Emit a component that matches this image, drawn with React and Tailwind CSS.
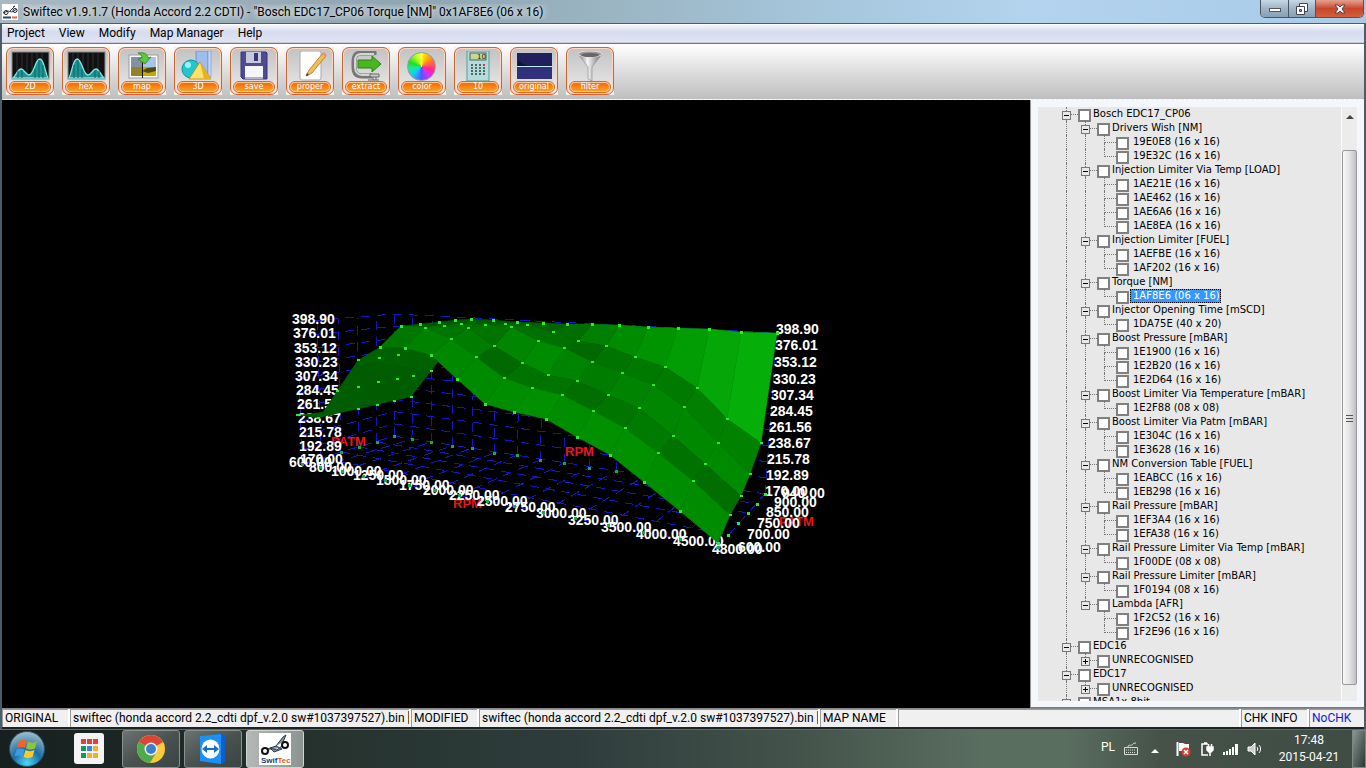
import React, { useState } from "react";

// ---------- 3D map data ----------

// Rows of the surface, back (940) to front (600), each from high RPM to low
const SURFACE = [
  [[777, 333], [741, 332], [709, 329], [678, 328], [648, 327], [619, 325], [592, 324], [567, 324], [543, 323], [517, 322], [493, 320], [471, 319], [455, 320], [439, 322], [420, 324], [401, 326]],
  [[761, 443], [727, 419], [697, 388], [665, 367], [635, 357], [606, 346], [578, 341], [553, 332], [527, 325], [505, 324], [485, 325], [461, 324], [444, 326], [425, 328], [401, 326]],
  [[750, 474], [718, 443], [684, 407], [653, 385], [622, 373], [592, 362], [564, 348], [538, 341], [511, 327], [485, 325], [461, 324], [444, 326], [425, 328], [401, 326]],
  [[741, 496], [705, 464], [673, 436], [639, 408], [608, 395], [577, 381], [548, 375], [522, 363], [494, 346], [468, 328], [444, 326], [425, 328], [401, 326]],
  [[730, 515], [693, 481], [658, 453], [625, 428], [593, 411], [562, 395], [532, 388], [504, 378], [476, 357], [451, 339], [425, 328], [401, 326]],
  [[718, 543], [680, 511], [644, 482], [610, 455], [577, 437], [546, 419], [514, 412], [485, 404], [457, 379], [431, 355], [405, 348], [380, 347]],
];

const SHADES = [
  ["#06ae0a", "#04a608", "#029d04", "#009500", "#008b00", "#007f00", "#006e00", "#006400", "#006000", "#005c00", "#005c00", "#005a00", "#005a00", "#005a00"],
  ["#008200", "#007f00", "#007a00", "#007900", "#007400", "#006900", "#007000", "#007000", "#006a00", "#006600", "#006600", "#006600", "#006400"],
  ["#008a00", "#008800", "#008600", "#008300", "#007c00", "#008300", "#008c00", "#008600", "#007400", "#007000", "#007000", "#007000"],
  ["#006e00", "#007200", "#007a00", "#007600", "#006e00", "#007400", "#007200", "#006a00", "#007c00", "#007400", "#007000"],
  ["#008c00", "#008e00", "#009000", "#009000", "#008e00", "#009000", "#008e00", "#008a00", "#008800", "#008200", "#007800"],
];

const FOLD_DOTS = [
  [337, 391], [358, 360], [379, 358], [398, 355], [358, 387], [378, 382], [397, 379], [413, 376],
  [431, 371], [358, 409], [377, 405], [394, 401], [411, 397], [318, 418], [297, 415],
];

const FLOOR_FRONT = [
  [302, 464], [320, 467], [342, 471], [363, 476], [385, 480], [409, 485], [435, 490], [459, 495],
  [487, 501], [514, 506], [543, 512], [575, 518], [608, 525], [643, 532], [680, 539], [718, 547],
];
const FLOOR_BACK = [
  [394, 436], [412, 439], [431, 442], [452, 446], [472, 448], [494, 453], [517, 455], [540, 460],
  [564, 463], [589, 468], [616, 471], [645, 476], [674, 481], [703, 485], [734, 489], [765, 494],
];
const FLOOR_LEFT = [[302, 464], [321, 458], [341, 452], [359, 447], [377, 442], [394, 436]];
const FLOOR_RIGHT = [[718, 547], [728, 535], [738, 523], [748, 513], [757, 504], [765, 494]];

const TORQUE = ["398.90", "376.01", "353.12", "330.23", "307.34", "284.45", "261.56", "238.67", "215.78", "192.89", "170.00"];
const LEFT_AXIS = [[292, 319], [293, 333], [294, 348], [295, 362], [295, 376], [296, 390], [297, 404], [298, 418], [299, 432], [299, 446], [300, 459]];
const RIGHT_AXIS = [[776, 329], [775, 345], [774, 362], [773, 379], [771, 395], [770, 411], [769, 427], [768, 443], [767, 459], [766, 475], [765, 491]];

const RPM_LABELS = [
  ["600.00", 289, 462], ["800.00", 309, 467], ["1000.00", 331, 471], ["1250.00", 353, 475],
  ["1500.00", 376, 480], ["1750.00", 399, 485], ["2000.00", 423, 490], ["2250.00", 449, 495],
  ["2500.00", 477, 501], ["2750.00", 505, 507], ["3000.00", 536, 513], ["3250.00", 568, 520],
  ["3500.00", 601, 527], ["4000.00", 636, 534], ["4500.00", 673, 541], ["4800.00", 712, 549],
];
const PATM_LABELS = [
  ["600.00", 738, 547], ["700.00", 747, 534], ["750.00", 757, 523],
  ["850.00", 766, 512], ["900.00", 774, 502], ["940.00", 782, 493],
];
const AXIS_NAMES = [["PATM", 331, 441], ["RPM", 565, 451], ["RPM", 453, 503], ["PATM", 779, 521]];

// ---------- tree data ----------
// [depth, label, state, last child of its parent]
const TREE = [
  [0, "Bosch EDC17_CP06", "-"],
  [1, "Drivers Wish [NM]", "-"],
  [2, "19E0E8 (16 x 16)"],
  [2, "19E32C (16 x 16)", "", true],
  [1, "Injection Limiter Via Temp [LOAD]", "-"],
  [2, "1AE21E (16 x 16)"],
  [2, "1AE462 (16 x 16)"],
  [2, "1AE6A6 (16 x 16)"],
  [2, "1AE8EA (16 x 16)", "", true],
  [1, "Injection Limiter [FUEL]", "-"],
  [2, "1AEFBE (16 x 16)"],
  [2, "1AF202 (16 x 16)", "", true],
  [1, "Torque [NM]", "-"],
  [2, "1AF8E6 (06 x 16)", "", true],
  [1, "Injector Opening Time [mSCD]", "-"],
  [2, "1DA75E (40 x 20)", "", true],
  [1, "Boost Pressure [mBAR]", "-"],
  [2, "1E1900 (16 x 16)"],
  [2, "1E2B20 (16 x 16)"],
  [2, "1E2D64 (16 x 16)", "", true],
  [1, "Boost Limiter Via Temperature [mBAR]", "-"],
  [2, "1E2F88 (08 x 08)", "", true],
  [1, "Boost Limiter Via Patm [mBAR]", "-"],
  [2, "1E304C (16 x 16)"],
  [2, "1E3628 (16 x 16)", "", true],
  [1, "NM Conversion Table [FUEL]", "-"],
  [2, "1EABCC (16 x 16)"],
  [2, "1EB298 (16 x 16)", "", true],
  [1, "Rail Pressure [mBAR]", "-"],
  [2, "1EF3A4 (16 x 16)"],
  [2, "1EFA38 (16 x 16)", "", true],
  [1, "Rail Pressure Limiter Via Temp [mBAR]", "-"],
  [2, "1F00DE (08 x 08)", "", true],
  [1, "Rail Pressure Limiter [mBAR]", "-"],
  [2, "1F0194 (08 x 16)", "", true],
  [1, "Lambda [AFR]", "-", true],
  [2, "1F2C52 (16 x 16)"],
  [2, "1F2E96 (16 x 16)", "", true],
  [0, "EDC16", "-"],
  [1, "UNRECOGNISED", "+", true],
  [0, "EDC17", "-"],
  [1, "UNRECOGNISED", "+", true],
  [0, "MSA1x 8bit", "-"],
];

const lerp = (a, b, t) => a + (b - a) * t;

const toPoints = (list) => list.map((p) => p.join(",")).join(" ");

const MapChart = () => {
  const levels = TORQUE.map((_, i) => i / 10);
  const quads = [];
  SHADES.forEach((shades, r) => {
    shades.forEach((fill, c) => {
      const back = SURFACE[r];
      const front = SURFACE[r + 1];
      if (!front[c + 1]) return;
      quads.push({
        key: `${r}-${c}`,
        fill,
        points: toPoints([back[c], back[c + 1], front[c + 1], front[c]]),
      });
    });
  });

  return (
    <svg
      viewBox="2 100 1028 608"
      className="block h-full w-full bg-black"
      role="img"
      aria-label="Torque map in 3D"
    >
      {/* blue grid on the floor and both walls */}
      <g stroke="#1414c8" strokeWidth="1" strokeDasharray="9 7" fill="none" shapeRendering="crispEdges">
        {FLOOR_FRONT.map(([x, y], i) => (
          <line key={`f${i}`} x1={x} y1={y} x2={FLOOR_BACK[i][0]} y2={FLOOR_BACK[i][1]} />
        ))}
        {FLOOR_LEFT.map(([x, y], i) => (
          <line key={`l${i}`} x1={x} y1={y} x2={FLOOR_RIGHT[i][0]} y2={FLOOR_RIGHT[i][1]} />
        ))}
        {FLOOR_BACK.map(([x, y], i) => (
          <line key={`b${i}`} x1={x} y1={y} x2={lerp(394, 777, (x - 394) / 371)} y2={lerp(314, 333, i / 15)} />
        ))}
        {FLOOR_LEFT.map(([x, y], i) => (
          <line key={`w${i}`} x1={x} y1={y} x2={x - 5 + i} y2={lerp(322, 314, i / 5)} />
        ))}
        {levels.map((t) => (
          <polyline
            key={t}
            points={toPoints([
              [lerp(302, 297, t), lerp(464, 322, t)],
              [394, lerp(436, 314, t)],
              [lerp(765, 777, t), lerp(494, 333, t)],
            ])}
          />
        ))}
      </g>

      <g
        fill="#f01414"
        className="font-['Liberation_Sans',Arial,sans-serif] text-[13px] font-bold"
        dominantBaseline="central"
      >
        {AXIS_NAMES.map(([text, x, y]) => (
          <text key={x} x={x} y={y}>{text}</text>
        ))}
      </g>
      <g
        fill="#fff"
        className="font-['Liberation_Sans',Arial,sans-serif] text-[14px] font-bold"
        dominantBaseline="central"
      >
        {TORQUE.map((value, i) => (
          <text key={`tl${value}`} x={LEFT_AXIS[i][0]} y={LEFT_AXIS[i][1]}>{value}</text>
        ))}
        {TORQUE.map((value, i) => (
          <text key={`tr${value}`} x={RIGHT_AXIS[i][0]} y={RIGHT_AXIS[i][1]}>{value}</text>
        ))}
        {RPM_LABELS.map(([text, x, y]) => (
          <text key={`r${text}`} x={x} y={y}>{text}</text>
        ))}
        {PATM_LABELS.map(([text, x, y]) => (
          <text key={`p${text}`} x={x} y={y}>{text}</text>
        ))}
      </g>

      {/* the fold at low RPM */}
      <polygon
        fill="#005c00"
        points="297,415 318,418 358,409 411,397 438,362 431,355 405,348 380,347 358,360 337,391 323,412"
      />
      <polygon fill="#006a00" points="380,347 405,348 431,355 438,362 425,370 358,360" opacity="0.4" />
      {quads.map((q) => (
        <polygon key={q.key} points={q.points} fill={q.fill} stroke={q.fill} strokeWidth="0.5" />
      ))}

      <g fill="#28f028" shapeRendering="crispEdges">
        {SURFACE.map((row, r) =>
          row.map(([x, y], i) => (
            <rect key={`${r}-${i}`} x={x - 1} y={y - 1} width="3" height={(r === 0 || r === 5) ? 3 : 2} />
          ))
        )}
        {FOLD_DOTS.map(([x, y]) => (
          <rect key={`${x}-${y}`} x={x - 1} y={y - 1} width="3" height="2" />
        ))}
        {FLOOR_RIGHT.map(([x, y]) => (
          <rect key={`${x}-${y}`} x={x - 1} y={y - 1} width="3" height="3" />
        ))}
      </g>
      <g fill="#10b040" shapeRendering="crispEdges">
        {FLOOR_BACK.slice(0, 11).concat(FLOOR_FRONT, FLOOR_LEFT.slice(2, 5)).map(([x, y]) => (
          <rect key={`${x}-${y}`} x={x - 1} y={y - 1} width="3" height="3" />
        ))}
      </g>
    </svg>
  );
};

// ---------- toolbar icons, 40x30 each ----------

const WaveIcon = ({ flip }) => (
  <svg viewBox="0 0 40 30" className="h-[30px] w-10">
    <rect x="2" y="1" width="37" height="27" fill="#111" stroke="#8a8a8a" />
    <path d="M7 2v26M12 2v26M17 2v26M22 2v26M27 2v26M32 2v26" stroke="#333" />
    <g transform={flip ? "translate(41 0) scale(-1 1)" : undefined}>
      <path d="M3 27C6 24 8 18 11 18s5 6 8 6c5 0 6-16 11-16 4 0 5 13 8 19z" fill="#1f9393" stroke="#7fe6e6" strokeWidth="1.3" />
      <path d="M8 20v7M12 19v8M25 18v9M29 9v18M33 14v13" stroke="#0c6464" />
    </g>
  </svg>
);

const MapIcon = () => (
  <svg viewBox="0 0 40 30" className="h-[30px] w-10">
    <rect x="7" y="4" width="29" height="23" fill="#fff" stroke="#999" />
    <rect x="9" y="6" width="25" height="10" fill="#a8c4e8" />
    <rect x="9" y="16" width="25" height="9" fill="#c9a900" />
    <path d="M20 20l5-3 9-1v4l-8 2z" fill="#4c4c14" />
    <rect x="9" y="6" width="11" height="19" fill="#555" opacity=".45" />
    <path d="M20.500 8v19" stroke="#111" />
    <path d="M16 2c6-1 10 1 10 5l3-1-6 7-7-5 4-1c0-2-1-4-4-5z" fill="#5cc83c" stroke="#287818" strokeWidth=".7" />
  </svg>
);

const SolidsIcon = () => (
  <svg viewBox="0 0 40 30" className="h-[30px] w-10">
    <rect x="18" y="0" width="12" height="26" fill="#9ebcf0" stroke="#7393cc" />
    <path d="M30 0h3v26h-3z" fill="#c4d6f8" stroke="#7393cc" strokeWidth=".6" />
    <circle cx="13" cy="18" r="9" fill="#22c6cf" stroke="#0c94a0" />
    <circle cx="10" cy="14" r="3" fill="#9cf2f2" />
    <path d="M22 11l11 17H11z" fill="#ffe069" stroke="#b48c14" strokeWidth=".8" />
    <path d="M22 11l11 17h-7z" fill="#e8b41e" />
  </svg>
);

const FloppyIcon = () => (
  <svg viewBox="0 0 40 30" className="h-[30px] w-10">
    <path d="M7 1h25l1 1v26H9l-2-2z" fill="#4f4a94" stroke="#39357a" />
    <rect x="12" y="1" width="15" height="11" fill="#c8c8dc" />
    <rect x="20" y="2" width="4" height="8" fill="#39357a" />
    <rect x="11" y="15" width="18" height="13" fill="#f6f6fa" />
    <path d="M11 27h18" stroke="#b0b0c8" strokeWidth="2" />
  </svg>
);

const PaperIcon = () => (
  <svg viewBox="0 0 40 30" className="h-[30px] w-10">
    <rect x="10" y="0" width="21" height="29" rx="2" fill="#fdfdfd" stroke="#aaa" />
    <path d="M16 25l3-6L33 2l3 3-14 17z" fill="#f0bc58" stroke="#a87820" strokeWidth=".8" />
    <path d="M32 3l3 3 2-2-3-3z" fill="#e89078" />
    <path d="M16 25l1-3 2 2z" fill="#333" />
  </svg>
);

const ExtractIcon = () => (
  <svg viewBox="0 0 40 30" className="h-[30px] w-10">
    <path d="M28 4V2H15C9 2 8 6 8 10v6c0 5 2 9 8 9h10" fill="none" stroke="#777" strokeWidth="5" />
    <path d="M28 3H15c-5 0-6 3-6 7v6c0 5 3 8 7 8h10" fill="none" stroke="#d4d4d4" strokeWidth="2" />
    <path d="M12 9h14V5l9 8-9 8v-4H12z" fill="#48b81e" stroke="#2c8010" />
    <path d="M24 23h9v3h-9zM27 26v3M22 29h11M30 26v3" fill="#ccc" stroke="#666" />
  </svg>
);

const ColorIcon = () => (
  <span className="mx-auto block h-[30px] w-10 px-[5px] py-px">
    <span className="block h-[29px] w-[29px] rounded-full border border-[#999] bg-[conic-gradient(#ff3,#fc0_20deg,#f73_60deg,#f29_110deg,#c3f_145deg,#55f_180deg,#1cf_225deg,#1e9_260deg,#2d2_290deg,#af2_330deg,#ff3)]" />
  </span>
);

const CalcIcon = () => (
  <svg viewBox="0 0 40 30" className="h-[30px] w-10">
    <rect x="9" y="0" width="22" height="30" fill="#b4dcdc" stroke="#5c9c9c" />
    <rect x="12" y="2" width="16" height="7" fill="#c4d890" stroke="#466" />
    <text x="19" y="8" fontSize="7" fill="#222" fontFamily="DejaVu Sans">10</text>
    <path d="M13 14h14M13 17h14M13 20h14M13 23h14" stroke="#566" strokeWidth="2" strokeDasharray="2 2" />
    <path d="M25 14h2" stroke="#e33" strokeWidth="2" />
  </svg>
);

const OriginalIcon = () => (
  <svg viewBox="0 0 40 30" className="h-[30px] w-10">
    <rect x="3" y="2" width="35" height="26" fill="#20205c" />
    <rect x="3" y="16" width="35" height="12" fill="#30307c" />
    <path d="M4 9c3 3 6 5 10 6H4z" fill="#10103c" />
    <path d="M3 15.500h35" stroke="#c0f0f4" />
  </svg>
);

const FunnelIcon = () => (
  <svg viewBox="0 0 40 30" className="h-[30px] w-10">
    <defs>
      <linearGradient id="steel">
        <stop offset="0" stopColor="#777" />
        <stop offset=".4" stopColor="#f4f4f4" />
        <stop offset="1" stopColor="#6c6c6c" />
      </linearGradient>
    </defs>
    <path d="M8 3l10 13v12l4 2V16L32 3z" fill="url(#steel)" stroke="#888" strokeWidth=".6" />
    <ellipse cx="20" cy="3" rx="12" ry="3" fill="#999" stroke="#ddd" />
    <ellipse cx="20" cy="4" rx="9" ry="2" fill="#666" />
  </svg>
);

const TOOLS = [
  ["2D", <WaveIcon />],
  ["hex", <WaveIcon flip />],
  ["map", <MapIcon />],
  ["3D", <SolidsIcon />],
  ["save", <FloppyIcon />],
  ["proper", <PaperIcon />],
  ["extract", <ExtractIcon />],
  ["color", <ColorIcon />],
  ["10", <CalcIcon />],
  ["original", <OriginalIcon />],
  ["filter", <FunnelIcon />],
];

const ToolButton = ({ label, icon }) => (
  <button type="button" className="h-12 w-12 bg-[#f4f0ec]">
    <span className="flex h-12 w-12 flex-col items-center rounded-[7px] border border-[#d4602c] bg-linear-to-b from-[#c2c2c2] to-[#ececec] pt-[3px] shadow-[inset_0_0_0_1px_#fbd9c4]">
      {icon}
      <span className="mt-px flex h-[10px] w-10 items-center justify-center rounded-full border border-[#ffc890] bg-linear-to-b from-[#f06a10] to-[#f8a020] text-[8px] leading-[8px] text-white outline outline-[#e0641c]">
        {label}
      </span>
    </span>
  </button>
);

const TreeRow = ({ depth, label, state, last, selected, lastBranch }) => {
  const [checked, setChecked] = useState(false);
  const guides = [];
  for (let i = 0; i < depth; i++) {
    // a closed branch has no line beneath it
    const open = i === 0 || !lastBranch;
    guides.push(
      <span key={i} className="flex w-[19px] pl-[9px]">
        {open && <span className="h-full border-l border-dotted border-[#777]" />}
      </span>
    );
  }
  return (
    <li className="flex h-[14px] whitespace-nowrap pl-[19px]">
      {guides}
      <span className="relative flex w-[21px] flex-col pl-[9px]">
        <span className="h-[8px] border-b border-l border-dotted border-[#777]" />
        {!last && <span className="h-[6px] border-l border-dotted border-[#777]" />}
        {state && (
          <button
            type="button"
            aria-label={state === "+" ? `Expand ${label}` : `Collapse ${label}`}
            className="absolute left-[5px] top-1 flex h-[9px] w-[9px] items-center justify-center border border-[#777] bg-[#e8e8e8]"
          >
            <span className="absolute h-px w-[5px] bg-black" />
            {state === "+" && <span className="absolute h-[5px] w-px bg-black" />}
          </button>
        )}
      </span>
      <label className="flex">
        <input
          type="checkbox"
          checked={checked}
          onChange={() => setChecked(!checked)}
          className="mt-[2px] h-[13px] w-[13px] shrink-0 appearance-none border-2 border-[#808080] bg-white checked:bg-[#3399ff]"
        />
        <span
          className={
            selected
              ? "ml-px h-[14px] border border-dotted border-black bg-[#3399ff] pl-[2px] leading-[12px] text-white"
              : depth === 2
                ? "pl-1 leading-[14px]"
                : "pl-[2px] leading-[14px]"
          }
        >
          {label}
        </span>
      </label>
    </li>
  );
};

const MapTree = () => (
  <aside className="flex w-[334px] shrink-0 border-b border-l border-b-[#777] border-l-[#999] bg-[#f4f8fc] pb-[6px] pl-[7px] pr-[7px] pt-[7px]">
    <ul className="min-w-0 flex-1 overflow-hidden bg-[#e8e8e8] font-['DejaVu_Sans',Verdana,sans-serif] text-[10px] text-black">
      {TREE.map(([depth, label, state, last], i) => (
        <TreeRow
          key={i}
          depth={depth}
          label={label}
          state={state}
          last={last}
          lastBranch={depth === 2 && i > 35}
          selected={label === "1AF8E6 (06 x 16)"}
        />
      ))}
    </ul>
    <div className="flex w-4 flex-col border-l border-[#fafafa] bg-[#ececec]">
      <button type="button" aria-label="Scroll up" className="flex h-[43px] justify-center pt-[7px]">
        <svg viewBox="0 0 8 5" className="h-[5px] w-2"><path d="M0 5l4-4 4 4z" fill="#444" /></svg>
      </button>
      <div className="flex flex-1 flex-col items-center justify-center gap-px rounded-xs border border-[#999] bg-linear-to-r from-[#f8f8f8] via-[#e4e4e6] to-[#c0c0c4]">
        <span className="h-[2px] w-[7px] border-b border-[#555]" />
        <span className="h-[2px] w-[7px] border-b border-[#555]" />
        <span className="h-[2px] w-[7px] border-b border-[#555]" />
      </div>
      <div className="h-4" />
    </div>
  </aside>
);

const TitleBar = () => (
  <header className="flex h-[23px] items-center bg-[radial-gradient(ellipse_at_430px_28px,#8c3c48_0,transparent_26px),radial-gradient(ellipse_at_230px_30px,#4c5c9c_0,transparent_24px),linear-gradient(90deg,#a9b9c4_0,#8fa5b1_30%,#9bb5c3_45%,#a6c6dc_60%,#b3d3ee_75%,#a9cbe8_100%)] pl-[2px]">
    <svg viewBox="0 0 16 16" className="h-4 w-4 bg-white">
      <path d="M1 9l5-2 4 1 5-3M8 7l5-5M11 3l2-1" stroke="#345" fill="none" />
      <circle cx="4" cy="8.500" r="2" fill="none" stroke="#222" />
      <circle cx="13" cy="6.500" r="2" fill="none" stroke="#222" />
      <path d="M1 13.500h8" stroke="#247" strokeWidth="2" />
      <path d="M10 13.500h5" stroke="#e63" strokeWidth="2" />
    </svg>
    <h1 className="ml-[5px] flex-1 truncate text-[12px] leading-4 text-black [text-shadow:0_0_6px_#fff,0_0_8px_#fff]">
      Swiftec v1.9.1.7 (Honda Accord 2.2 CDTI) - "Bosch EDC17_CP06 Torque [NM]" 0x1AF8E6 (06 x 16)
    </h1>
    <div className="mr-[2px] flex h-[18px] self-start overflow-hidden rounded-b-[5px] border border-t-0 border-[#4a5560]">
      <button type="button" aria-label="Minimize" className="flex w-7 items-center justify-center border-r border-[#4a5560] bg-linear-to-b from-[#c8d8e6] via-[#a0b4c6] via-50% to-[#86a0b8]">
        <span className="mt-[3px] h-1 w-3 border border-[#555] bg-white" />
      </button>
      <button type="button" aria-label="Restore" className="flex w-[27px] items-center justify-center border-r border-[#4a5560] bg-linear-to-b from-[#c8d8e6] via-[#a0b4c6] via-50% to-[#86a0b8]">
        <svg viewBox="0 0 12 12" className="h-3 w-3" fill="#fff" stroke="#445">
          <path d="M3.500.500h8v8h-8z" />
          <path d="M.500 3.500h8v8h-8z" />
          <path d="M3.500 6.500h2v2h-2z" fill="#8aa" />
        </svg>
      </button>
      <button type="button" aria-label="Close" className="flex w-[47px] items-center justify-center bg-linear-to-b from-[#e4a090] via-[#c8452c] via-50% to-[#d0603c]">
        <svg viewBox="0 0 12 10" className="h-[10px] w-3">
          <path d="M1 1h3l2 2 2-2h3L8 5l3 4H8L6 7 4 9H1l3-4z" fill="#fff" stroke="#554048" />
        </svg>
      </button>
    </div>
  </header>
);

const MENU = ["Project", "View", "Modify", "Map Manager", "Help"];

const StatusCell = ({ children, className }) => (
  <span className={`overflow-hidden whitespace-nowrap border-l border-t border-[#999] bg-[#f0f0f0] pl-[2px] ${className}`}>
    {children}
  </span>
);

const FILE_NAME = "swiftec (honda accord 2.2_cdti dpf_v.2.0 sw#1037397527).bin [00";

const StatusBar = () => (
  <footer className="flex h-[19px] gap-[2px] border-t border-[#888] bg-white text-[12px] leading-4 text-black">
    <StatusCell className="w-[66px]">ORIGINAL</StatusCell>
    <StatusCell className="w-[339px]">{FILE_NAME}</StatusCell>
    <StatusCell className="w-[66px]">MODIFIED</StatusCell>
    <StatusCell className="w-[339px]">{FILE_NAME}</StatusCell>
    <StatusCell className="w-[76px]">MAP NAME</StatusCell>
    <StatusCell className="min-w-0 flex-1" />
    <StatusCell className="w-[66px]">CHK INFO</StatusCell>
    <StatusCell className="w-[55px] text-[#1414d8]">NoCHK</StatusCell>
  </footer>
);

const TaskButton = ({ label, active, children }) => (
  <button
    type="button"
    aria-label={label}
    className={`flex h-[38px] w-[58px] items-center justify-center rounded-[3px] border ${
      active
        ? "border-[#d0d4d2] bg-linear-to-r from-[#b4b8b6] to-[#8c9492]"
        : "border-[#8a9290] bg-linear-to-br from-[#6c7472] via-[#4a5250] via-50% to-[#3a4442]"
    }`}
  >
    {children}
  </button>
);

const Taskbar = () => (
  <nav className="flex h-[39px] border-t border-[#5c6a68] bg-[linear-gradient(90deg,#16201f_0,#26332f_25%,#2e3d3c_42%,#43524a_58%,#5a6e60_72%,#5a6e60_78%,#465248_85%,#3e4c44_100%)] text-white">
    <button type="button" aria-label="Start" className="ml-[9px] mt-px h-9 w-9">
      <svg viewBox="0 0 36 36" className="h-9 w-9">
        <defs>
          <radialGradient id="orb" cx=".5" cy=".9" r=".9">
            <stop offset="0" stopColor="#4cd8f8" />
            <stop offset=".45" stopColor="#1c6ca4" />
            <stop offset="1" stopColor="#a4c0cc" />
          </radialGradient>
        </defs>
        <circle cx="18" cy="18" r="17.500" fill="url(#orb)" stroke="#2c4c5c" />
        <path d="M10 10c3-1.500 5-1.500 8 0l-2 7c-3-1.500-5-1.500-8 0z" fill="#f06428" />
        <path d="M19 10.500c3 1.500 6 1.500 9 0l-2 7c-3 1.500-6 1.500-9 0z" fill="#8cc43c" />
        <path d="M7.500 18.500c3-1.500 5-1.500 8 0l-2 7c-3-1.500-5-1.500-8 0z" fill="#3c9ce0" />
        <path d="M16.500 19c3 1.500 6 1.500 9 0l-2 7c-3 1.500-6 1.500-9 0z" fill="#fcc828" />
      </svg>
    </button>
    <button type="button" aria-label="Apps" className="ml-[29px] mt-[3px] grid h-[31px] w-[30px] grid-cols-3 content-center justify-items-center gap-y-[2px] rounded-[3px] bg-[#f4f4f4] px-[6px]">
      <i className="h-[5px] w-[5px] bg-[#dc4438]" /><i className="h-[5px] w-[5px] bg-[#dc4438]" /><i className="h-[5px] w-[5px] bg-[#dc4438]" />
      <i className="h-[5px] w-[5px] bg-[#109c58]" /><i className="h-[5px] w-[5px] bg-[#3c80ec]" /><i className="h-[5px] w-[5px] bg-[#f0b028]" />
      <i className="h-[5px] w-[5px] bg-[#109c58]" /><i className="h-[5px] w-[5px] bg-[#f0b028]" /><i className="h-[5px] w-[5px] bg-[#f0b028]" />
    </button>
    <div className="ml-[18px] flex gap-1">
      <TaskButton label="Chrome">
        <svg viewBox="0 0 28 28" className="h-7 w-7">
          <circle cx="14" cy="14" r="14" fill="#f8cc3c" />
          <path d="M14 14L1.900 7A14 14 0 0 1 26.100 7z" fill="#dc4434" />
          <path d="M1.900 7A14 14 0 0 0 13 28l6-10-5-4z" fill="#4cac4c" />
          <circle cx="14" cy="14" r="6.500" fill="#f0f0f0" />
          <circle cx="14" cy="14" r="5" fill="#3c80cc" />
        </svg>
      </TaskButton>
      <TaskButton label="TeamViewer">
        <svg viewBox="0 0 28 32" className="h-8 w-7">
          <path d="M1 3l21-2 4 2v26l-4 2-21-3z" fill="#0c60c8" />
          <path d="M1 3l21-2v30L1 28z" fill="#1c90f4" />
          <ellipse cx="11.500" cy="16" rx="9" ry="9.500" fill="#fff" />
          <path d="M3 16l5-4v3h7v-3l5 4-5 4v-3H8v3z" fill="#1470cc" />
        </svg>
      </TaskButton>
      <TaskButton label="SwifTec" active>
        <svg viewBox="0 0 32 32" className="h-8 w-8 bg-white">
          <path d="M3 19l8-4 7 2 6-5 4 1M17 13l7-9 3-2-3 7M11 15l6-2 6 3-8 3z" fill="#7c94a8" stroke="#2c3c4c" />
          <circle cx="6" cy="18" r="3" fill="#fff" stroke="#111" strokeWidth="2" />
          <circle cx="26" cy="12" r="3" fill="#fff" stroke="#111" strokeWidth="2" />
          <text x="2" y="30" fontSize="8" fontWeight="bold" fontFamily="Liberation Sans" fill="#1c3c6c">
            Swif<tspan fill="#e0601c">Tec</tspan>
          </text>
        </svg>
      </TaskButton>
    </div>
    <div className="ml-auto flex items-center text-[12px]">
      <span className="-mt-1">PL</span>
      <svg viewBox="0 0 14 14" className="ml-[9px] h-[14px] w-[14px]" fill="none" stroke="#d8dcd8">
        <path d="M.500 5.500h13v7H.500zM4 5c0-3 3-1 4-2s1-2 4-2" />
        <path d="M2 8h10M2 10.500h10" strokeDasharray="1 1" />
      </svg>
      <svg viewBox="0 0 8 4" className="ml-[13px] mt-1 h-1 w-2"><path d="M0 4l4-4 4 4z" fill="#fff" /></svg>
      <svg viewBox="0 0 16 16" className="ml-[16px] h-4 w-4">
        <path d="M2.500 1v14" stroke="#fff" strokeWidth="2" />
        <path d="M4 2h4l2 1h4v7H4z" fill="#fff" />
        <circle cx="11" cy="11" r="4.500" fill="#dc3c2c" />
        <path d="M9 9l4 4M13 9l-4 4" stroke="#fff" strokeWidth="1.500" />
      </svg>
      <svg viewBox="0 0 16 16" className="ml-[8px] h-4 w-4" fill="none" stroke="#fff" strokeWidth="1.500">
        <path d="M9 14H3V3h6M5 2h3" />
        <path d="M8 6h6v3l-2 2h-2L8 9zM9.500 6V3M12.500 6V3M11 11v4" fill="#fff" />
      </svg>
      <svg viewBox="0 0 16 12" className="ml-[8px] h-3 w-4" fill="#fff">
        <path d="M0 9h2v3H0zM3 8h2v4H3zM6 6h2v6H6zM9 4h2v8H9zM12 1h3v11h-3z" />
      </svg>
      <svg viewBox="0 0 15 14" className="ml-[8px] h-[14px] w-[15px]" fill="none" stroke="#fff">
        <path d="M1 5h3l4-4v12L4 9H1z" fill="#ccc" />
        <path d="M10 5c1 1 1 3 0 4M12 3c2 2 2 6 0 8" />
      </svg>
      <div className="ml-[16px] mr-3 flex w-[62px] flex-col items-center whitespace-nowrap text-[12px] leading-[17px]">
        <span>17:48</span>
        <span>2015-04-21</span>
      </div>
      <button type="button" aria-label="Show desktop" className="h-full w-[14px] border border-[#7c8884] bg-linear-to-br from-[#8c9894] to-[#2c3834]" />
    </div>
  </nav>
);

export default function App() {
  return (
    <div className="flex h-screen flex-col overflow-hidden bg-black font-['Roboto','Segoe_UI',sans-serif]">
      <TitleBar />
      <div className="flex min-h-0 flex-1 flex-col border-l-2 border-r-2 border-t border-[#4c5c68] bg-black">
        <div className="flex h-[18px] items-start gap-[14px] border-t border-white bg-linear-to-b from-[#f4f6fb] via-[#d6dcee] via-40% to-[#e0e4f4] pl-[5px] text-[12px] leading-4 text-black">
          {MENU.map((item) => (
            <button key={item} type="button">{item}</button>
          ))}
        </div>
        <div className="h-[2px] border-b border-[#777] bg-[#c8ccd8]" />
        <div className="flex h-[56px] gap-2 border-b border-dashed border-[#eee] bg-linear-to-b from-white to-[#bebebe] pl-1 pt-[3px] font-['DejaVu_Sans',sans-serif]">
          {TOOLS.map(([label, icon]) => (
            <ToolButton key={label} label={label} icon={icon} />
          ))}
        </div>
        <main className="flex min-h-0 flex-1">
          <div className="min-w-0 flex-1">
            <MapChart />
          </div>
          <MapTree />
        </main>
        <StatusBar />
        <div className="h-[2px] bg-[#1c2424]" />
      </div>
      <Taskbar />
    </div>
  );
}
